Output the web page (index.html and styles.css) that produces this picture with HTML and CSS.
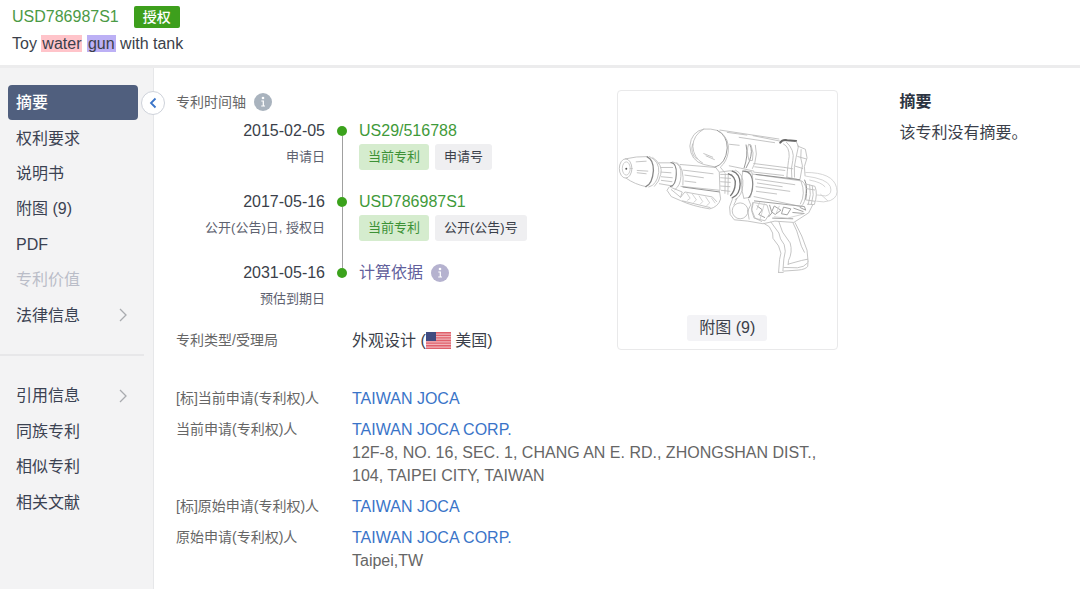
FILE: index.html
```html
<!DOCTYPE html>
<html lang="zh-CN">
<head>
<meta charset="utf-8">
<meta name="viewport" content="width=device-width, initial-scale=1">
<title>USD786987S1</title>
<link rel="stylesheet" href="styles.css">
</head>
<body>
<svg class="sprite" aria-hidden="true">
  <symbol id="info" viewBox="0 0 18 18">
    <circle cx="9" cy="9" r="9" fill="currentColor"/>
    <circle cx="9" cy="5" r="1.3" fill="#fff"/>
    <path d="M7.3 8H9.3V13M7.2 13H11" fill="none" stroke="#fff" stroke-width="1.2"/>
  </symbol>
  <symbol id="chevron" viewBox="0 0 8 14">
    <path d="M1 1L7 7L1 13" fill="none" stroke="currentColor" stroke-width="1.3"/>
  </symbol>
</svg>

<header class="header">
  <div class="header-row">
    <span class="patent-number">USD786987S1</span>
    <span class="status">授权</span>
  </div>
  <h1 class="title">Toy <mark class="hit-red">water</mark> <mark class="hit-purple">gun</mark> with tank</h1>
</header>

<div class="layout">
  <aside class="sidebar">
    <nav>
      <ul class="menu">
        <li><a class="active" href="#abstract">摘要</a></li>
        <li><a href="#claims">权利要求</a></li>
        <li><a href="#description">说明书</a></li>
        <li><a href="#figures">附图 (9)</a></li>
        <li><a href="#pdf">PDF</a></li>
        <li><a class="disabled" href="#value" aria-disabled="true">专利价值</a></li>
        <li><a href="#legal">法律信息<svg class="chevron"><use href="#chevron"/></svg></a></li>
      </ul>
      <hr class="divider">
      <ul class="menu menu-secondary">
        <li><a href="#citations">引用信息<svg class="chevron"><use href="#chevron"/></svg></a></li>
        <li><a href="#family">同族专利</a></li>
        <li><a href="#similar">相似专利</a></li>
        <li><a href="#literature">相关文献</a></li>
      </ul>
    </nav>
    <button class="collapse" type="button" aria-label="收起">
      <svg viewBox="0 0 8 12" width="8" height="12"><path d="M6.500 1.500L2 6L6.500 10.500" fill="none" stroke="#3a74c8" stroke-width="1.800"/></svg>
    </button>
  </aside>

  <main class="main">
    <div class="record">
      <div class="overview">
        <section>
          <h2 class="section-label">专利时间轴 <svg class="info"><use href="#info"/></svg></h2>
          <ol class="timeline">
            <li>
              <div class="when"><time>2015-02-05</time><span>申请日</span></div>
              <div class="marker"></div>
              <div class="what"><a href="#application">US29/516788</a>
                <div class="tags"><span class="tag current">当前专利</span><span class="tag">申请号</span></div></div>
            </li>
            <li>
              <div class="when"><time>2017-05-16</time><span>公开(公告)日, 授权日</span></div>
              <div class="marker"></div>
              <div class="what"><a href="#publication">USD786987S1</a>
                <div class="tags"><span class="tag current">当前专利</span><span class="tag">公开(公告)号</span></div></div>
            </li>
            <li>
              <div class="when"><time>2031-05-16</time><span>预估到期日</span></div>
              <div class="marker"></div>
              <div class="what"><a class="basis" href="#basis">计算依据 <svg class="info info-purple"><use href="#info"/></svg></a></div>
            </li>
          </ol>
          <dl class="fields">
            <div class="field">
              <dt>专利类型/受理局</dt>
              <dd class="type">外观设计 (<svg class="flag" viewBox="0 0 25 17" role="img" aria-label="US">
                <path fill="#f0b4ba" d="M0 0H25V17H0Z"/>
                <path stroke="#e0606b" stroke-width="1.350" d="M0 .7H25M0 3.300H25M0 5.900H25M0 8.500H25M0 11.100H25M0 13.700H25M0 16.300H25"/>
                <path fill="#414b80" d="M0 0H10V9H0Z"/>
              </svg> 美国)</dd>
            </div>
          </dl>
        </section>

        <figure class="figure" id="figures">
          <svg class="drawing" viewBox="20 18 660 600" role="img" aria-label="Toy water gun with tank">
            <g fill="none" stroke="#b9b9b9" stroke-width="2.500" stroke-linecap="round" stroke-linejoin="round">
              <!-- nozzle -->
              <ellipse cx="43" cy="252" rx="19" ry="29"/>
              <ellipse cx="45" cy="252" rx="12" ry="20" stroke="#c4c4c4"/>
              <path d="M42 223Q75 215 110 216M44 281Q70 300 105 307M78 258L110 260M78 265L105 268M75 232L105 230"/>
              <path stroke="#888" stroke-width="4" d="M108 217Q127 225 127 258Q124 298 104 307"/>
              <path d="M115 216Q146 230 143 264Q138 302 113 308M125 219Q157 241 149 270Q145 292 130 306"/>
              <path d="M144 235L186 235M145 298L185 305M151 249L185 249M151 263L180 265M151 277L184 280M151 288L183 292"/>
              <path stroke="#888" stroke-width="3.500" d="M180 234Q198 236 196 270Q195 302 178 307"/>
              <path d="M185 232Q214 237 210 276Q209 303 192 316M198 234Q221 250 216 302"/>
              <!-- barrel and front grip -->
              <path d="M208 240L315 249L326 263L328 318L210 306M217 257L307 268M222 272L278 280M222 290L255 294"/>
              <path stroke="#959595" stroke-width="3" d="M216 308L327 323"/>
              <path d="M174 309L168 318L181 337L209 349Q245 366 297 374Q323 368 330 344L327 324M181 316L209 339L214 323L182 310M209 339L222 323L305 338L318 352M215 350L298 370"/>
              <path stroke="#c9c9c9" d="M228 327L238 342L230 348M245 330L257 347L249 354M265 335L276 352L268 360M285 338L297 356L288 364M303 342L313 356"/>
              <!-- coupling rings -->
              <path d="M330 270L364 270M330 280L360 282M330 292L359 294M330 305L358 307M332 318L358 321M344 268L343 327M353 268L352 330M328 263L358 259L373 260"/>
              <path stroke="#777" stroke-width="4" d="M365 260Q389 267 389 299Q388 332 365 341M354 268Q377 276 374 300Q373 319 360 334"/>
              <path d="M375 257Q401 270 397 303Q395 335 374 346M397 260Q388 300 400 342M404 260L424 262Q432 296 420 339L401 342"/>
              <path stroke="#888" stroke-width="3.500" d="M397 260Q426 258 427 300Q427 327 415 340"/>
              <!-- water tank -->
              <path d="M320 137Q300 131 279 133Q241 141 237 184Q239 229 279 240L316 248M279 133Q247 151 246 185Q248 220 276 236M245 178Q237 207 258 224"/>
              <path stroke="#989898" stroke-width="3" d="M320 137Q350 152 350 190Q346 239 313 248"/>
              <path d="M326 139Q359 163 353 203Q348 233 329 248L342 264M279 207L306 218M286 214L311 225"/>
              <path d="M328 136L506 163M350 143L409 151M386 158L493 174M357 179L386 182M428 153L508 169"/>
              <path stroke="#989898" stroke-width="3" d="M407 181Q414 213 401 250M419 181Q428 198 417 230L407 250"/>
              <path d="M414 180Q407 199 416 228L426 228Q432 206 422 182ZM435 182Q442 208 433 236L426 252M356 244L390 251L430 260M430 237L524 249M433 247L524 258M430 263L520 273"/>
              <!-- rear cap and hose -->
              <path stroke="#666" stroke-width="6" d="M510 174Q517 164 531 167L558 169"/>
              <path d="M520 178Q538 187 537 216Q533 238 530 279M528 172Q555 196 548 228Q541 250 545 280M558 170L565 185L558 218Q550 244 553 278M562 184L586 194L591 220L583 246L585 274M573 195Q569 221 577 244L570 283M524 249L548 253M530 278L570 287M563 216L588 223M555 245L578 252"/>
              <path stroke="#cdcdcd" d="M587 264Q669 264 680 309Q688 338 661 349Q642 356 620 351M587 275Q651 283 661 306Q669 330 647 335L621 332M599 287Q635 294 645 307M632 330L653 349"/>
              <!-- receiver -->
              <path d="M427 269L576 290Q592 304 587 328Q586 355 573 367L431 337M435 284L554 301M441 296L516 307M437 307L539 321M438 321L499 329"/>
              <path stroke="#909090" stroke-width="3" d="M437 270L569 286M584 287Q594 308 587 345"/>
              <path d="M573 291Q588 328 571 359M588 299L615 306Q624 329 613 361L592 360M599 302Q605 330 595 360M607 305Q614 330 604 360M590 313L614 317M588 347L614 351"/>
              <!-- trigger housing -->
              <circle cx="389" cy="380" r="24"/>
              <path d="M367 341L357 368L359 391L371 407L412 411L458 419L494 411L551 415L596 386L608 362M379 343L370 362M414 345L421 362L412 380L416 405M427 355L423 374L434 402L454 412M430 355L470 362L478 389L464 410L431 402L424 381Z"/>
              <path stroke="#a2a2a2" stroke-width="3" d="M432 350L583 367L587 378L570 370M478 363L485 386L475 398M493 366L512 378L495 391L485 384ZM521 369L542 374L531 392L515 389ZM551 372L579 382M548 385L582 388M487 402L548 404M440 365L456 377L445 391L463 400"/>
              <path stroke="#cdcdcd" d="M448 354L439 376M462 359L449 406M492 398L532 402L579 390M507 366L498 386"/>
              <!-- handle -->
              <path d="M461 418L477 428L487 447L488 463L505 486L512 508L508 527L505 566M482 414L506 447Q508 465 522 482Q529 501 521 525L518 561M506 413L517 444L540 477Q548 505 535 530L534 542M549 417L560 441L574 487L583 505M555 416L575 456L591 499L594 532"/>
              <path d="M534 541L574 530L593 526M520 562L564 559Q586 557 593 548L594 532M521 551L562 552Q583 550 592 538M505 566L519 566"/>
            </g>
            <circle cx="45" cy="253" r="3" fill="#555"/>
          </svg>
          <button class="figure-button" type="button">附图 (9)</button>
        </figure>
      </div>

      <dl class="fields parties">
        <div class="field"><dt>[标]当前申请(专利权)人</dt><dd><a href="#joca">TAIWAN JOCA</a></dd></div>
        <div class="field"><dt>当前申请(专利权)人</dt><dd><a href="#joca-corp">TAIWAN JOCA CORP.</a><address>12F-8, NO. 16, SEC. 1, CHANG AN E. RD., ZHONGSHAN DIST., 104, TAIPEI CITY, TAIWAN</address></dd></div>
        <div class="field"><dt>[标]原始申请(专利权)人</dt><dd><a href="#joca">TAIWAN JOCA</a></dd></div>
        <div class="field"><dt>原始申请(专利权)人</dt><dd><a href="#joca-corp">TAIWAN JOCA CORP.</a><address>Taipei,TW</address></dd></div>
      </dl>
    </div>

    <section class="abstract" id="abstract">
      <h2>摘要</h2>
      <p>该专利没有摘要。</p>
    </section>
  </main>
</div>
</body>
</html>
```
FILE: styles.css
```css
* { box-sizing: border-box; }

body {
  margin: 0;
  min-height: 100vh;
  display: flex;
  flex-direction: column;
  background: #fff;
  color: #3b3f4a;
  font: 16px/23px "Liberation Sans", "Noto Sans CJK SC", sans-serif;
}

h1, h2, p, ul, ol, dl, dd, figure { margin: 0; padding: 0; }
ul, ol { list-style: none; }
a { color: #3a74c8; text-decoration: none; }
button { font: inherit; color: inherit; cursor: pointer; }
.sprite { display: none; }

.header {
  display: flex;
  flex-direction: column;
  gap: 5px;
  padding: 6px 12px 10px;
  border-bottom: 3px solid #ececed;
  line-height: 22px;
}
.header-row { display: flex; align-items: center; gap: 15px; }
.patent-number { color: #4b9a45; }
.status {
  padding: 0 9px;
  border-radius: 2px;
  background: #3d9f1c;
  color: #fff;
  font-size: 14px;
  font-weight: 500;
}
.title { font-size: 16px; font-weight: 400; }
.title mark { padding: 0 1px; color: inherit; }
.title .hit-red { background: #ffc4ca; }
.title .hit-purple { background: #bcb0f5; }

.layout { flex: 1; display: flex; }

.sidebar {
  position: relative;
  flex: 0 0 154px;
  padding-top: 17px;
  border-right: 1px solid #e6e7e9;
  background: #f3f3f4;
}
.menu {
  display: grid;
  grid-auto-rows: 1fr;
  min-height: 248px;
  padding: 0 15px 0 8px;
}
.menu-secondary { min-height: 142px; }
.menu a {
  display: flex;
  align-items: center;
  justify-content: space-between;
  height: 100%;
  padding: 0 11px 0 8px;
  border-radius: 4px;
  color: #3b4252;
}
.menu .active { background: #505f7e; color: #fff; font-weight: 500; }
.menu .disabled { color: #babdc8; }
.chevron { width: 8px; height: 14px; color: #a9abaf; }
.divider {
  height: 2px;
  margin: 21px 9px 22px 0;
  border: 0;
  background: #e7e7e9;
}
.collapse {
  position: absolute;
  top: 23px;
  right: -12px;
  display: grid;
  place-items: center;
  width: 24px;
  height: 24px;
  padding: 0;
  border: 1px solid #ced2da;
  border-radius: 50%;
  background: #fff;
}

.main {
  flex: 1;
  min-width: 0;
  display: grid;
  grid-template-columns: minmax(0, 11fr) minmax(0, 3fr);
  gap: 62px;
  padding: 22px 0 16px 22px;
}
.overview { display: grid; grid-template-columns: 2fr 1fr; align-items: start; }
.section-label {
  display: flex;
  align-items: center;
  gap: 8px;
  font-size: 14px;
  font-weight: 400;
  line-height: 24px;
  color: #666;
}
.info { width: 18px; height: 18px; color: #a9b3be; }
.info-purple { color: #b5b2cf; }

.timeline { margin-top: 5px; }
.timeline li { display: grid; grid-template-columns: 149px 34px 1fr; }
.when, .what { display: flex; flex-direction: column; gap: 2px; padding-bottom: 20px; }
.timeline li:last-child > div { padding-bottom: 0; }
.when { align-items: flex-end; white-space: nowrap; }
.when span { font-size: 13px; line-height: 26px; color: #5e6270; }
.what a { color: #3f9a3a; }
.what .basis { display: flex; align-items: center; gap: 8px; color: #625f9c; }
.marker { display: flex; flex-direction: column; align-items: center; }
.marker::before {
  content: "";
  width: 10px;
  height: 10px;
  margin-top: 7px;
  border-radius: 50%;
  background: #3ba21c;
}
.timeline li:not(:last-child) .marker::after {
  content: "";
  flex: 1;
  width: 1px;
  margin-bottom: -7px;
  background: #a0a0a0;
}
.tags { display: flex; gap: 6px; }
.tag {
  padding: 0 9px;
  border-radius: 3px;
  background: #efeff1;
  font-size: 13px;
  line-height: 26px;
  white-space: nowrap;
}
.tag.current { background: #d5ecce; color: #3c9136; }

.fields { display: flex; flex-direction: column; gap: 8px; margin-top: 17px; }
.parties { margin-top: 35px; padding-right: 20px; }
.field { display: grid; grid-template-columns: 176px 1fr; }
.field dt { font-size: 14px; color: #666; white-space: nowrap; }
.field address { font-style: normal; color: #666; }
.type { display: flex; align-items: center; white-space: pre; }
.flag { width: 25px; height: 17px; }

.figure {
  display: flex;
  flex-direction: column;
  align-items: center;
  gap: 25px;
  padding-bottom: 8px;
  border: 1px solid #e9e9ea;
  border-radius: 4px;
}
.drawing { display: block; width: 100%; overflow: visible; }
.figure-button {
  padding: 0 12px;
  border: 0;
  border-radius: 3px;
  background: #f3f3f6;
  line-height: 26px;
}

.abstract { padding-right: 16px; }
.abstract h2 { font-size: 16px; font-weight: 700; color: #2c3442; }
.abstract p { margin-top: 8px; }
```
